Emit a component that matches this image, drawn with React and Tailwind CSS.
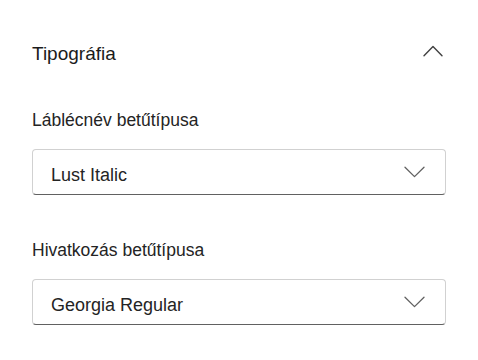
import { useState } from 'react';

function ChevronDown({ className }) {
  return (
    <svg className={className} width="21" height="12" viewBox="0 0 21 12" fill="none">
      <path d="M1 1.2 L10.5 10.6 L20 1.2" stroke="currentColor" strokeWidth="1.3" strokeLinecap="round" strokeLinejoin="round" />
    </svg>
  );
}

function ChevronUp({ className }) {
  return (
    <svg className={className} width="20" height="12" viewBox="0 0 20 12" fill="none">
      <path d="M1 10.8 L10 1.4 L19 10.8" stroke="currentColor" strokeWidth="1.4" strokeLinecap="round" strokeLinejoin="round" />
    </svg>
  );
}

function FontSelect({ label, value, className }) {
  return (
    <div className={className}>
      <div className="text-[17.5px] leading-[22px] text-[#242424]">{label}</div>
      <button className="mt-[18px] flex h-[46px] w-full items-center justify-between rounded-[4px] border border-[#d1d1d1] border-b-[#616161] bg-white pl-[18px] pr-[20px] pt-[5px] text-left">
        <span className="text-[18px] leading-[24px] text-[#242424]">{value}</span>
        <ChevronDown className="-mt-[5px] text-[#616161]" />
      </button>
    </div>
  );
}

export default function App() {
  const [open, setOpen] = useState(true);

  return (
    <div className="h-[360px] w-[478px] bg-white px-[32px] pt-[42px] font-['Liberation_Sans',Arial,sans-serif]">
      <div className="flex items-center justify-between">
        <h2 className="text-[19px] leading-[24px] text-[#1b1b1b]">Tipográfia</h2>
        <button className="mr-[3px] -mt-[6px] text-[#424242]" onClick={() => setOpen(!open)}>
          <ChevronUp />
        </button>
      </div>
      {open && (
        <div className="mt-[43px]">
          <FontSelect label="Láblécnév betűtípusa" value="Lust Italic" />
          <FontSelect className="mt-[44px]" label="Hivatkozás betűtípusa" value="Georgia Regular" />
        </div>
      )}
    </div>
  );
}
